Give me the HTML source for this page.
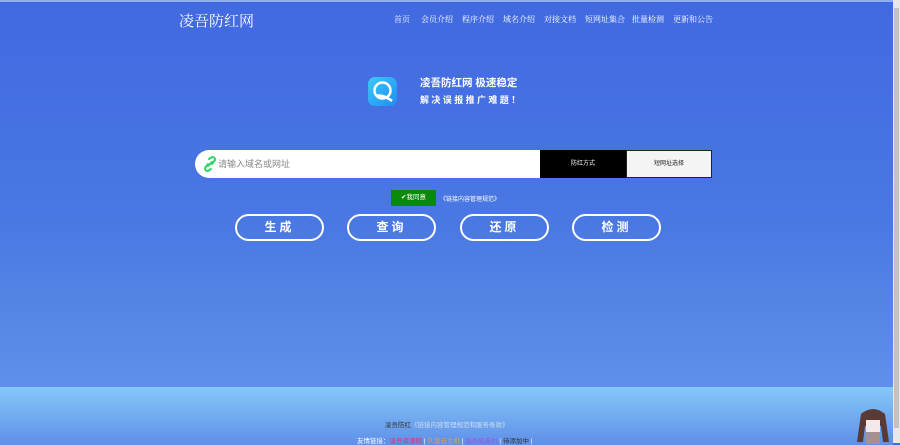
<!DOCTYPE html>
<html><head><meta charset="utf-8"><style>
*{margin:0;padding:0;box-sizing:border-box}
body{width:900px;height:443px;overflow:hidden;font-family:"Liberation Sans","Noto Sans CJK SC",sans-serif;position:relative;background:#4169e1}
#page{position:absolute;left:0;top:0;width:893px;height:443px;background:linear-gradient(#4169e1 0%,#4a78e3 50%,#5f8fe8 86%);border-top:2px solid #8fb0f0}
#sb{position:absolute;right:0;top:0;width:7px;height:443px;background:#e8e8e8}
#sb i{position:absolute;left:1px;top:8px;width:5px;height:420px;background:#c2c2c2}
.logo{position:absolute;left:179px;top:8px;color:#fff;font-size:15px;font-family:"Noto Serif CJK SC",serif}
.nav{position:absolute;top:12px;left:394px;color:#fff;font-size:8px;font-family:"Noto Serif CJK SC",serif}
.nav span{position:absolute;white-space:nowrap}
.app{position:absolute;left:368px;top:75px;width:29px;height:29px;border-radius:7px;background:linear-gradient(135deg,#3fc8f7,#1e8ef3)}
.app svg{position:absolute;left:0;top:0}
.s1{position:absolute;left:420px;top:73px;color:#fff;font-size:10.5px;font-weight:bold}
.s2{position:absolute;left:420px;top:91px;color:#fff;font-size:9px;font-weight:bold;letter-spacing:2.4px}
.inp{position:absolute;left:195px;top:148px;width:345px;height:28px;background:#fff;border-radius:14px 0 0 14px}
.inp span{position:absolute;left:23px;top:7px;font-size:9px;color:#888}
.inp svg{position:absolute;left:8px;top:6px}
.b1{position:absolute;left:540px;top:148px;width:86px;height:28px;background:#000;color:#fff;font-size:6px;text-align:center;line-height:28px}
.b2{position:absolute;left:626px;top:148px;width:86px;height:28px;background:#f4f4f4;border:1px solid #222;color:#222;font-size:6px;text-align:center;line-height:26px}
.agree{position:absolute;left:391px;top:188px;width:45px;height:16px;background:#0a8a0a;color:#fff;font-size:6.5px;line-height:16px;text-align:center}
.rule{position:absolute;left:440px;top:192px;color:#fff;font-size:6px}
.btn{position:absolute;top:212px;width:89px;height:27px;border:2px solid #fff;border-radius:14px;color:#fff;font-size:12px;font-weight:bold;text-align:center;line-height:23px;letter-spacing:3px}
.foot{position:absolute;left:0;top:385px;width:893px;height:58px;background:linear-gradient(#86c8f9,#5f8fe8)}
.f1{position:absolute;left:385px;top:417px;font-size:6.5px;color:#333}
.f1 b{font-weight:normal;color:#cde}
.f2{position:absolute;left:357px;top:433px;font-size:6.5px;color:#fff;white-space:nowrap}
</style></head><body>
<div id="page">
<div class="logo">凌吾防红网</div>
<div class="nav">
<span style="left:0">首页</span><span style="left:27px">会员介绍</span><span style="left:68px">程序介绍</span><span style="left:109px">域名介绍</span><span style="left:150px">对接文档</span><span style="left:191px">短网址集合</span><span style="left:238px">批量检测</span><span style="left:279px">更新和公告</span>
</div>
<div class="app"><svg width="29" height="29"><circle cx="14.5" cy="13.5" r="8" fill="none" stroke="#fff" stroke-width="2.5"/><path d="M8 19 Q15 17 24 24" fill="none" stroke="#fff" stroke-width="2.5"/></svg></div>
<div class="s1">凌吾防红网 极速稳定</div>
<div class="s2">解决误报推广难题！</div>
<div class="inp"><svg width="14" height="16" viewBox="0 0 14 16"><path d="M6 3 L9 1 Q12 1 12 4 L9 8 M8 13 L5 15 Q2 15 2 12 L5 8 M5 10 L9 6" fill="none" stroke="#2ed56a" stroke-width="2" stroke-linecap="round"/></svg><span>请输入域名或网址</span></div>
<div class="b1">防红方式</div>
<div class="b2">短网址选择</div>
<div class="agree">✔我同意</div>
<div class="rule">《链接内容管理规范》</div>
<div class="btn" style="left:235px">生成</div>
<div class="btn" style="left:347px">查询</div>
<div class="btn" style="left:460px">还原</div>
<div class="btn" style="left:572px">检测</div>
<div class="foot"></div>
<div class="f1">凌吾防红<b>《链接内容管理规范和服务条款》</b></div>
<div class="f2">友情链接：<span style="color:#e8306a">凌吾资源网</span> | <span style="color:#f0a030">久留云主机</span> | <span style="color:#a050e0">凌吾易支付</span> | <span style="color:#333">待添加中</span> |</div>
<svg style="position:absolute;left:853px;top:404px" width="40" height="39"><path d="M8 8 Q20 -2 32 8 L36 36 L30 36 L28 20 L12 20 L10 36 L4 36 Z" fill="#5a3a34"/><rect x="13" y="14" width="14" height="12" fill="#f4e8e8"/><rect x="13" y="26" width="14" height="12" fill="#a89090"/></svg>
</div>
<div id="sb"><i></i></div>
</body></html>
